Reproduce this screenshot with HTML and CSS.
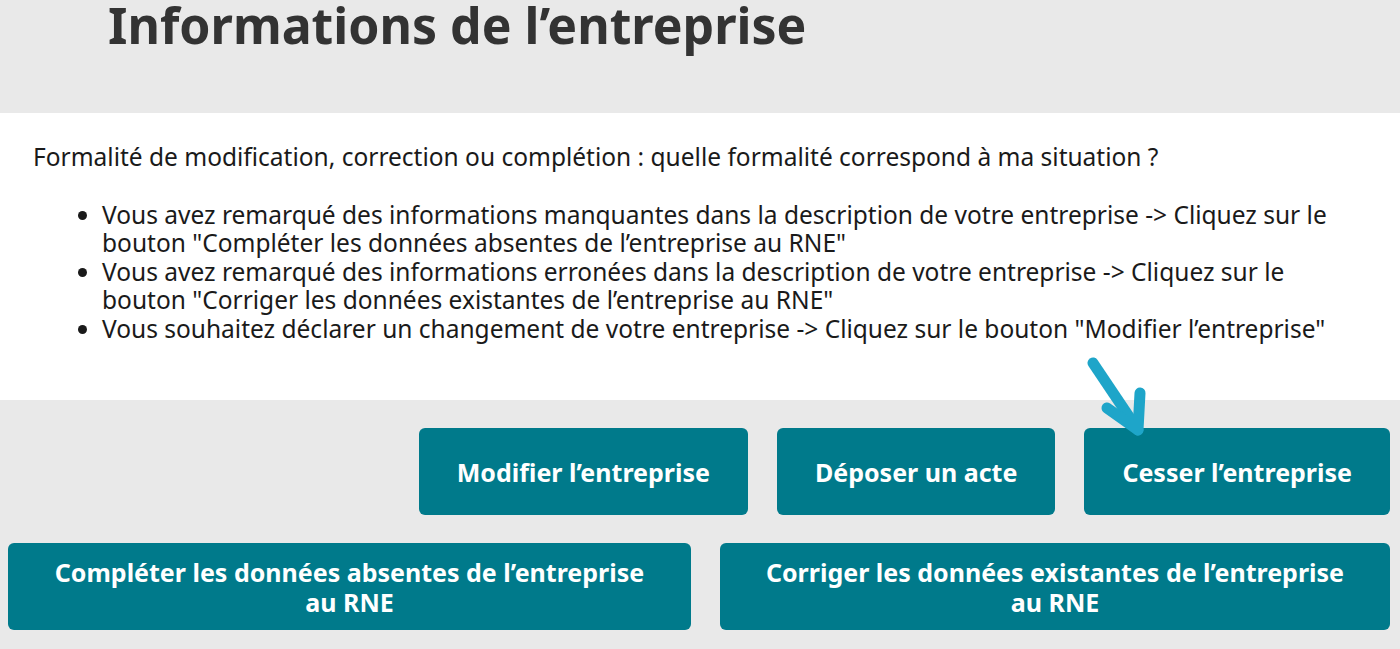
FILE: index.html
```html
<!DOCTYPE html>
<html lang="fr">
<head>
<meta charset="utf-8">
<title>Informations de l'entreprise</title>
<link rel="stylesheet" href="styles.css">
</head>
<body>
<header class="page-head">
  <h1 class="page-title">Informations de l’entreprise</h1>
</header>
<section class="info">
  <p class="info-lead">Formalité de modification, correction ou complétion : quelle formalité correspond à ma situation ?</p>
  <ul class="info-list">
    <li>Vous avez remarqué des informations manquantes dans la description de votre entreprise -&gt; Cliquez sur le bouton "Compléter les données absentes de l’entreprise au RNE"</li>
    <li>Vous avez remarqué des informations erronées dans la description de votre entreprise -&gt; Cliquez sur le bouton "Corriger les données existantes de l’entreprise au RNE"</li>
    <li>Vous souhaitez déclarer un changement de votre entreprise -&gt; Cliquez sur le bouton "Modifier l’entreprise"</li>
  </ul>
</section>
<section class="actions">
  <div class="actions-row actions-row--top">
    <button class="btn">Modifier l’entreprise</button>
    <button class="btn">Déposer un acte</button>
    <button class="btn btn--target">Cesser l’entreprise
      <svg class="pointer" width="70" height="90" viewBox="0 0 70 90" aria-hidden="true">
        <g fill="none" stroke="#1ea5c9" stroke-width="11" stroke-linecap="round" stroke-linejoin="round">
          <path d="M9 7 L54 74"/>
          <path d="M56 37 L54 74 L23 52"/>
        </g>
      </svg>
    </button>
  </div>
  <div class="actions-row actions-row--bottom">
    <button class="btn btn--wide-a">Compléter les données absentes de l’entreprise au RNE</button>
    <button class="btn btn--wide-b">Corriger les données existantes de l’entreprise au RNE</button>
  </div>
</section>
</body>
</html>
```
FILE: styles.css
```css
html, body {
  margin: 0;
  padding: 0;
}
body {
  font-family: "Noto Sans", "Open Sans", "Liberation Sans", sans-serif;
  background: #e9e9e9;
  color: #1a1a1a;
  width: 1400px;
  height: 649px;
  overflow: hidden;
}
.page-head {
  background: #e9e9e9;
  height: 113px;
  box-sizing: border-box;
  padding-left: 108px;
  overflow: hidden;
}
.page-title {
  margin: 0;
  font-size: 50px;
  line-height: 50px;
  font-weight: 700;
  color: #333333;
}
.info {
  background: #ffffff;
  height: 287px;
  box-sizing: border-box;
  padding: 0 33px;
  font-size: 24.5px;
  line-height: 28.5px;
  color: #1a1a1a;
}
.info-lead {
  margin: 0;
  padding-top: 30px;
}
.info-list {
  margin: 29px 0 0;
  padding-left: 69px;
}
.actions {
  padding: 28px 10px 0 8px;
  display: flex;
  flex-direction: column;
  gap: 28px;
}
.actions-row {
  display: flex;
  gap: 29px;
}
.actions-row--top {
  justify-content: flex-end;
}
.btn {
  position: relative;
  font-family: inherit;
  font-size: 25px;
  line-height: 30px;
  font-weight: 700;
  color: #ffffff;
  background: #007a8b;
  border: 0;
  border-radius: 6px;
  height: 87px;
  padding: 0 38px;
  text-align: center;
  cursor: pointer;
}
.btn--wide-a {
  width: 683px;
  padding: 0 40px;
}
.btn--wide-b {
  width: 670px;
  padding: 0 40px;
}
.pointer {
  position: absolute;
  left: 0;
  top: -72px;
}
```
